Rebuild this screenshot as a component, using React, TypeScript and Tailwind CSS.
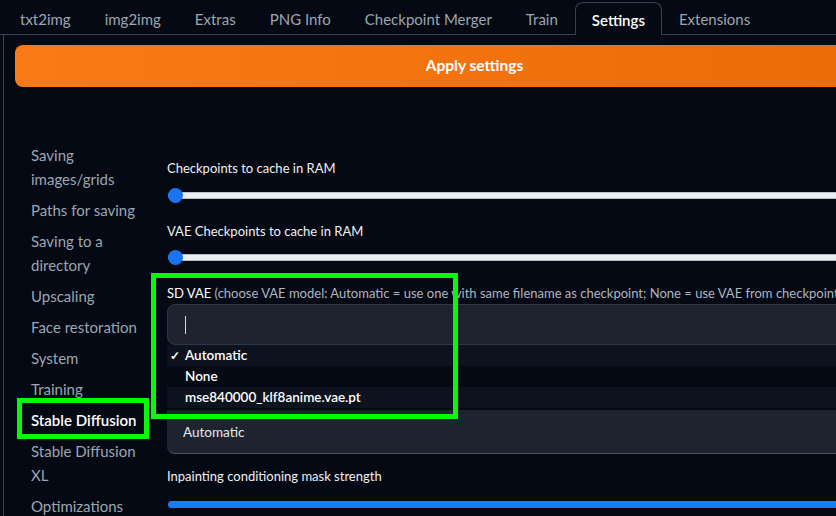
import React from "react"

const tabs = ["txt2img", "img2img", "Extras", "PNG Info", "Checkpoint Merger", "Train", "Settings", "Extensions"]

const sections = [
  "Saving images/grids",
  "Paths for saving",
  "Saving to a directory",
  "Upscaling",
  "Face restoration",
  "System",
  "Training",
  "Stable Diffusion",
  "Stable Diffusion XL",
  "Optimizations",
]

const vaeOptions = ["Automatic", "None", "mse840000_klf8anime.vae.pt"]

function Slider({ value, color }: { value: number; color: "white" | "blue" }) {
  if (color === "blue") {
    return <div className="h-[7px] w-full rounded-full bg-[#1a7cf5]" />
  }
  return (
    <div className="relative flex h-[14px] items-center">
      <div className="h-[7px] w-full rounded-full border border-[#b9bdc6] bg-[#eceef2]" />
      <div
        className="absolute top-0 h-[15px] w-[15px] rounded-full bg-[#1a73f0]"
        style={{ left: value }}
      />
    </div>
  )
}

export default function App() {
  return (
    <div className="relative h-[516px] w-[836px] overflow-hidden bg-[#050913] font-['Lato',sans-serif] text-[#e5e7eb]">
      <div className="w-[934px]">
        {/* tab strip */}
        <div className="flex h-[35px] items-end border-b border-[#3a414e] pl-[3px]">
          {tabs.map((t) =>
            t === "Settings" ? (
              <div
                key={t}
                className="relative -mb-px flex h-[33px] items-center rounded-t-lg border border-b-0 border-[#3a414e] bg-[#050913] px-4 pt-[3px] text-[15px] font-semibold text-white"
              >
                {t}
              </div>
            ) : (
              <div key={t} className="flex h-[33px] items-center px-[17px] pt-[3px] text-[15px] text-[#9aa6b2]">
                {t}
              </div>
            ),
          )}
        </div>

        <div className="ml-[3px] border-l border-[#3a414e] pb-10 pl-[11px] pt-[10px]">
          <button className="flex h-[42px] w-full items-center justify-center rounded-lg bg-gradient-to-r from-[#f97a16] to-[#ea6a06] text-[15.5px] font-bold text-white">
            Apply settings
          </button>

          <div className="mt-[56px] flex">
            {/* settings sections */}
            <nav className="ml-[16px] flex w-[120px] shrink-0 flex-col gap-[7px] text-[15px] leading-[24px] text-[#9aa6b2]">
              {sections.map((s) => (
                <div key={s} className={s === "Stable Diffusion" ? "font-semibold text-white" : ""}>
                  {s}
                </div>
              ))}
            </nav>

            <div className="ml-[16px] flex flex-1 flex-col text-[13px]">
              <div className="mt-[15px] leading-[20px] text-[#eef0f3]">Checkpoints to cache in RAM</div>
              <div className="ml-px mt-[10px]">
                <Slider value={0} color="white" />
              </div>

              <div className="mt-[19px] leading-[20px] text-[#eef0f3]">VAE Checkpoints to cache in RAM</div>
              <div className="ml-px mt-[9px]">
                <Slider value={0} color="white" />
              </div>

              <div className="mt-[19px] whitespace-nowrap leading-[20px]">
                <span className="text-white">SD VAE</span>{" "}
                <span className="text-[#aeb5c0]">
                  (choose VAE model: Automatic = use one with same filename as checkpoint; None = use VAE from checkpoint)
                </span>
              </div>

              {/* VAE picker with its open option list */}
              <div className="relative mt-[1px]">
                <div className="flex h-[41px] items-center rounded-lg border border-[#2f3744] bg-[#1d2430] px-[17px]">
                  <div className="h-[18px] w-px bg-[#cfd3da]" />
                </div>
                <div className="absolute left-0 right-0 top-[41px] z-10 flex flex-col text-[13.5px] font-semibold text-white">
                  {vaeOptions.map((o, i) => (
                    <div
                      key={o}
                      className={
                        "flex h-[21px] items-center " + (i === 1 ? "bg-[#060a14]" : "bg-[#0d131e]")
                      }
                    >
                      <span className="w-[18px] pl-[3px] text-[12px]">{i === 0 ? "✓" : ""}</span>
                      {o}
                    </div>
                  ))}
                </div>
              </div>

              {/* next setting, mostly hidden under the list */}
              <div className="mt-[18px] flex h-[47px] items-start">
                <div className="h-[12px] w-[2px] bg-[#1a5fc8]" />
              </div>
              <div className="flex h-[44px] items-center rounded-b-lg border-b border-[#4a515d] bg-[#1d2430] px-[16px] pt-[2px] text-[13.5px] text-[#e5e7eb]">
                Automatic
              </div>

              <div className="mt-[12px] leading-[20px] text-[#eef0f3]">Inpainting conditioning mask strength</div>
              <div className="ml-px mt-[15px]">
                <Slider value={0} color="blue" />
              </div>
            </div>
          </div>
        </div>
      </div>

      {/* highlight frames */}
      <div className="pointer-events-none absolute left-[151px] top-[273px] z-20 h-[146px] w-[307px] border-[5px] border-[#08f808]" />
      <div className="pointer-events-none absolute left-[17px] top-[398px] z-20 h-[41px] w-[132px] border-[5px] border-[#08f808]" />
    </div>
  )
}
